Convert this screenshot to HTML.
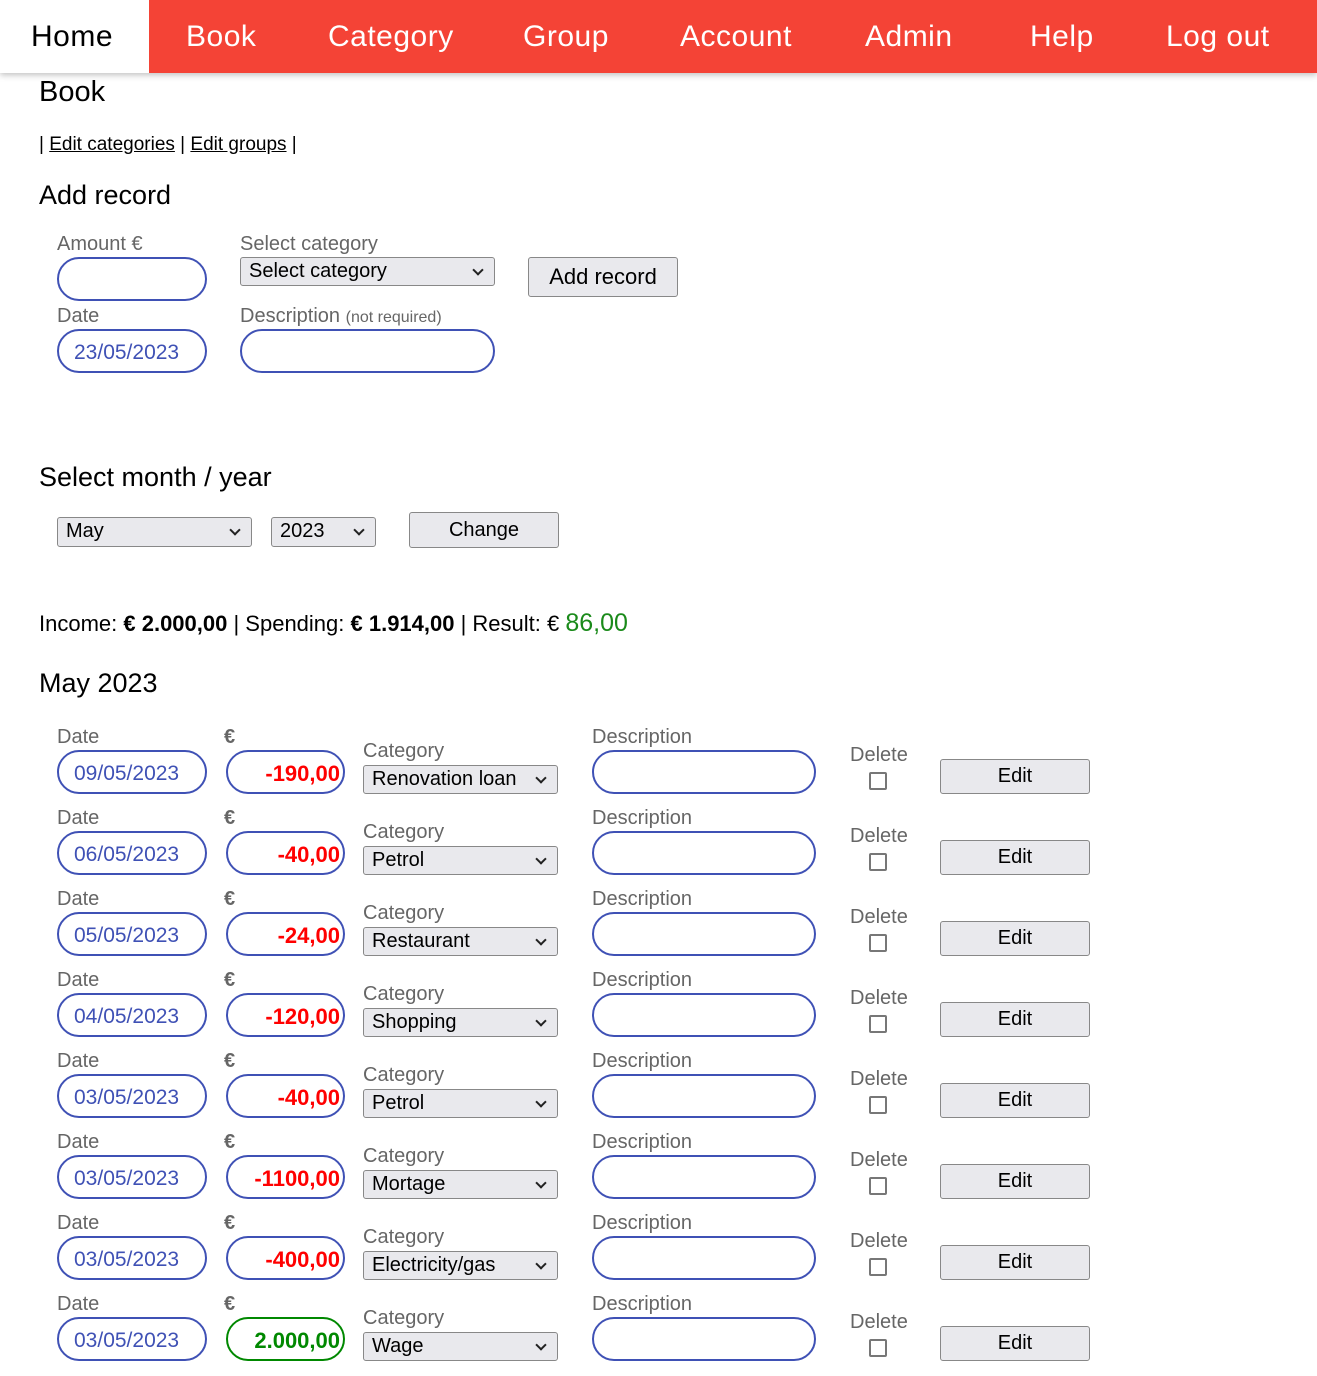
<!DOCTYPE html>
<html><head><meta charset="utf-8"><style>
*{box-sizing:border-box;margin:0;padding:0}
body{width:1317px;height:1376px;background:#fff;font-family:"Liberation Sans",sans-serif;position:relative;overflow:hidden;color:#000}
.nav{position:absolute;left:0;top:0;width:1317px;height:73px;background:#f44336;box-shadow:0 2px 6px rgba(0,0,0,.25)}
.nav span{position:absolute;top:19px;font-size:30px;letter-spacing:0.5px;color:#fff;line-height:36px}
.home{position:absolute;left:0;top:0;width:149px;height:73px;background:#fff}
.a{position:absolute}
.lbl{position:absolute;font-size:20px;color:#666;line-height:20px;white-space:nowrap}
.inp{position:absolute;border:2px solid #3f51b5;border-radius:22px;height:44px;font-size:21px;line-height:43px;color:#3f51b5;padding-left:15px}
.sel{position:absolute;border:1.5px solid #888;border-radius:3px;background:#e9e9ed;height:29px;font-size:20px;line-height:27px;padding-left:8px;color:#000}
.sel:after{content:"";position:absolute;right:12px;top:8px;width:6px;height:6px;border-right:2px solid #222;border-bottom:2px solid #222;transform:rotate(45deg)}
.btn{position:absolute;border:1.5px solid #888;border-radius:3px;background:#e9e9ed;text-align:center;font-size:20px;color:#000}
.row{position:absolute;left:0;width:1317px;height:80px}
.amt{text-align:right;padding:0 3px 0 0;font-weight:bold;color:#f00;font-size:22px}
.cb{position:absolute;left:869px;top:45px;width:18px;height:18px;border:2px solid #777;border-radius:2px}
h2{position:absolute;font-weight:normal;font-size:27px;left:39px}
</style></head><body>
<div class="nav"><div class="home"></div>
<span style="left:31px;color:#000">Home</span><span style="left:186px">Book</span><span style="left:328px">Category</span><span style="left:523px">Group</span><span style="left:680px">Account</span><span style="left:865px">Admin</span><span style="left:1030px">Help</span><span style="left:1166px">Log out</span></div>
<h2 style="top:76px;font-size:29px">Book</h2>
<div class="a" style="left:39px;top:134px;font-size:19px">| <u>Edit categories</u> | <u>Edit groups</u> |</div>
<h2 style="top:180px">Add record</h2>
<div class="lbl" style="left:57px;top:234px">Amount €</div>
<div class="inp" style="left:57px;top:257px;width:150px"></div>
<div class="lbl" style="left:240px;top:234px">Select category</div>
<div class="sel" style="left:240px;top:257px;width:255px">Select category</div>
<div class="btn" style="left:528px;top:257px;width:150px;height:40px;line-height:38px;font-size:22px">Add record</div>
<div class="lbl" style="left:57px;top:306px">Date</div>
<div class="inp" style="left:57px;top:329px;width:150px">23/05/2023</div>
<div class="lbl" style="left:240px;top:306px">Description <span style="font-size:16px">(not required)</span></div>
<div class="inp" style="left:240px;top:329px;width:255px"></div>
<h2 style="top:462px">Select month / year</h2>
<div class="sel" style="left:57px;top:517px;width:195px;height:30px">May</div>
<div class="sel" style="left:271px;top:517px;width:105px;height:30px">2023</div>
<div class="btn" style="left:409px;top:512px;width:150px;height:36px;line-height:34px">Change</div>
<div class="a" style="left:39px;top:609px;font-size:22px">Income: <b>€ 2.000,00</b> | Spending: <b>€ 1.914,00</b> | Result: € <span style="color:#1a8a1a;font-size:25px">86,00</span></div>
<h2 style="top:668px">May 2023</h2>

<div class="row" style="top:727px"><div class="lbl" style="left:57px">Date</div><div class="lbl" style="left:224px;font-weight:bold">€</div><div class="inp" style="left:57px;top:23px;width:150px">09/05/2023</div><div class="inp amt" style="left:226px;top:23px;width:119px">-190,00</div><div class="lbl" style="left:363px;top:14px">Category</div><div class="sel" style="left:363px;top:38px;width:195px">Renovation loan</div><div class="lbl" style="left:592px">Description</div><div class="inp" style="left:592px;top:23px;width:224px"></div><div class="lbl" style="left:850px;top:18px">Delete</div><div class="cb"></div><div class="btn" style="left:940px;top:32px;width:150px;height:35px;line-height:33px">Edit</div></div>
<div class="row" style="top:808px"><div class="lbl" style="left:57px">Date</div><div class="lbl" style="left:224px;font-weight:bold">€</div><div class="inp" style="left:57px;top:23px;width:150px">06/05/2023</div><div class="inp amt" style="left:226px;top:23px;width:119px">-40,00</div><div class="lbl" style="left:363px;top:14px">Category</div><div class="sel" style="left:363px;top:38px;width:195px">Petrol</div><div class="lbl" style="left:592px">Description</div><div class="inp" style="left:592px;top:23px;width:224px"></div><div class="lbl" style="left:850px;top:18px">Delete</div><div class="cb"></div><div class="btn" style="left:940px;top:32px;width:150px;height:35px;line-height:33px">Edit</div></div>
<div class="row" style="top:889px"><div class="lbl" style="left:57px">Date</div><div class="lbl" style="left:224px;font-weight:bold">€</div><div class="inp" style="left:57px;top:23px;width:150px">05/05/2023</div><div class="inp amt" style="left:226px;top:23px;width:119px">-24,00</div><div class="lbl" style="left:363px;top:14px">Category</div><div class="sel" style="left:363px;top:38px;width:195px">Restaurant</div><div class="lbl" style="left:592px">Description</div><div class="inp" style="left:592px;top:23px;width:224px"></div><div class="lbl" style="left:850px;top:18px">Delete</div><div class="cb"></div><div class="btn" style="left:940px;top:32px;width:150px;height:35px;line-height:33px">Edit</div></div>
<div class="row" style="top:970px"><div class="lbl" style="left:57px">Date</div><div class="lbl" style="left:224px;font-weight:bold">€</div><div class="inp" style="left:57px;top:23px;width:150px">04/05/2023</div><div class="inp amt" style="left:226px;top:23px;width:119px">-120,00</div><div class="lbl" style="left:363px;top:14px">Category</div><div class="sel" style="left:363px;top:38px;width:195px">Shopping</div><div class="lbl" style="left:592px">Description</div><div class="inp" style="left:592px;top:23px;width:224px"></div><div class="lbl" style="left:850px;top:18px">Delete</div><div class="cb"></div><div class="btn" style="left:940px;top:32px;width:150px;height:35px;line-height:33px">Edit</div></div>
<div class="row" style="top:1051px"><div class="lbl" style="left:57px">Date</div><div class="lbl" style="left:224px;font-weight:bold">€</div><div class="inp" style="left:57px;top:23px;width:150px">03/05/2023</div><div class="inp amt" style="left:226px;top:23px;width:119px">-40,00</div><div class="lbl" style="left:363px;top:14px">Category</div><div class="sel" style="left:363px;top:38px;width:195px">Petrol</div><div class="lbl" style="left:592px">Description</div><div class="inp" style="left:592px;top:23px;width:224px"></div><div class="lbl" style="left:850px;top:18px">Delete</div><div class="cb"></div><div class="btn" style="left:940px;top:32px;width:150px;height:35px;line-height:33px">Edit</div></div>
<div class="row" style="top:1132px"><div class="lbl" style="left:57px">Date</div><div class="lbl" style="left:224px;font-weight:bold">€</div><div class="inp" style="left:57px;top:23px;width:150px">03/05/2023</div><div class="inp amt" style="left:226px;top:23px;width:119px">-1100,00</div><div class="lbl" style="left:363px;top:14px">Category</div><div class="sel" style="left:363px;top:38px;width:195px">Mortage</div><div class="lbl" style="left:592px">Description</div><div class="inp" style="left:592px;top:23px;width:224px"></div><div class="lbl" style="left:850px;top:18px">Delete</div><div class="cb"></div><div class="btn" style="left:940px;top:32px;width:150px;height:35px;line-height:33px">Edit</div></div>
<div class="row" style="top:1213px"><div class="lbl" style="left:57px">Date</div><div class="lbl" style="left:224px;font-weight:bold">€</div><div class="inp" style="left:57px;top:23px;width:150px">03/05/2023</div><div class="inp amt" style="left:226px;top:23px;width:119px">-400,00</div><div class="lbl" style="left:363px;top:14px">Category</div><div class="sel" style="left:363px;top:38px;width:195px">Electricity/gas</div><div class="lbl" style="left:592px">Description</div><div class="inp" style="left:592px;top:23px;width:224px"></div><div class="lbl" style="left:850px;top:18px">Delete</div><div class="cb"></div><div class="btn" style="left:940px;top:32px;width:150px;height:35px;line-height:33px">Edit</div></div>
<div class="row" style="top:1294px"><div class="lbl" style="left:57px">Date</div><div class="lbl" style="left:224px;font-weight:bold">€</div><div class="inp" style="left:57px;top:23px;width:150px">03/05/2023</div><div class="inp amt" style="left:226px;top:23px;width:119px;color:#080;border-color:#080">2.000,00</div><div class="lbl" style="left:363px;top:14px">Category</div><div class="sel" style="left:363px;top:38px;width:195px">Wage</div><div class="lbl" style="left:592px">Description</div><div class="inp" style="left:592px;top:23px;width:224px"></div><div class="lbl" style="left:850px;top:18px">Delete</div><div class="cb"></div><div class="btn" style="left:940px;top:32px;width:150px;height:35px;line-height:33px">Edit</div></div>
</body></html>
